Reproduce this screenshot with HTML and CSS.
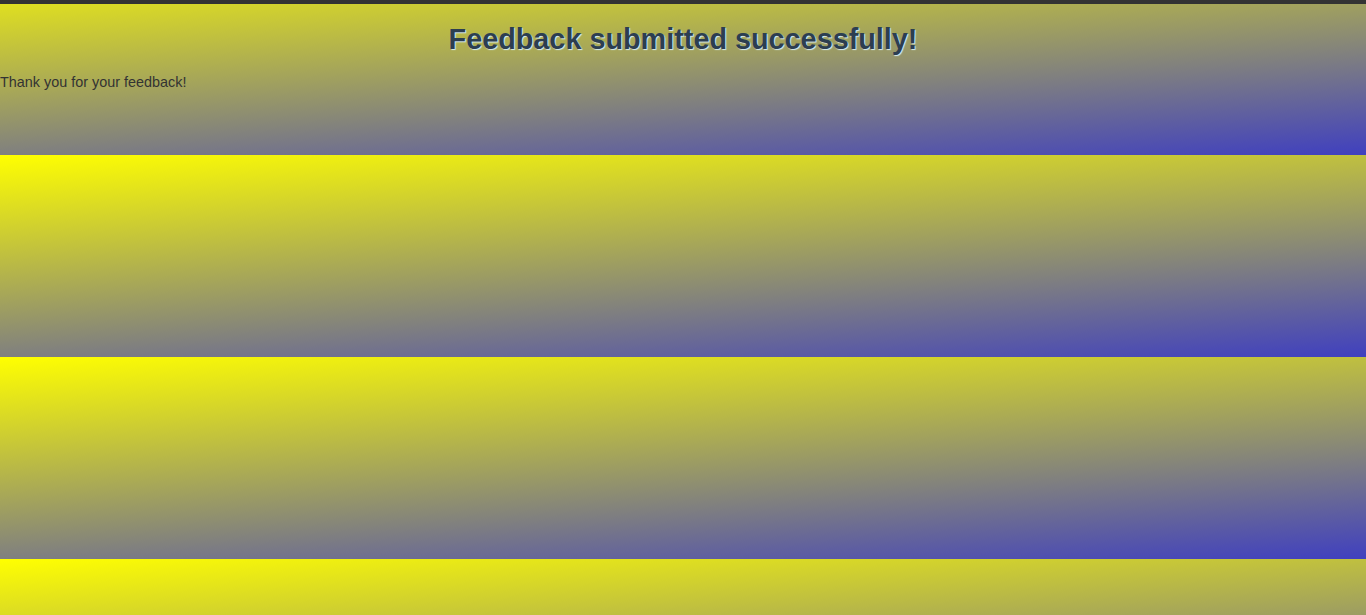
FILE: index.html
```html
<!DOCTYPE html>
<html lang="en">
<head>
<meta charset="utf-8">
<title>Feedback</title>
<link rel="stylesheet" href="styles.css">
</head>
<body class="page">
  <h1 class="title">Feedback submitted successfully!</h1>
  <p class="message">Thank you for your feedback!</p>
</body>
</html>
```

FILE: styles.css
```css
html {
  background: linear-gradient(to bottom right, #ffff00, #0000ff);
  background-size: 2732px 202px;
  background-position: 0 -47px;
  background-repeat: repeat;
  min-height: 100%;
}
.page {
  margin: 0;
  border-top: 4px solid #333333;
  font-family: "Liberation Sans", Arial, sans-serif;
  color: #333333;
}
.title {
  margin: 19px 0 18px;
  font-size: 28.8px;
  font-weight: bold;
  text-align: center;
  color: #2c3e50;
  text-shadow: 1px 1px 1px #d6ecf5;
}
.message {
  margin: 0;
  font-size: 14.4px;
}
```
